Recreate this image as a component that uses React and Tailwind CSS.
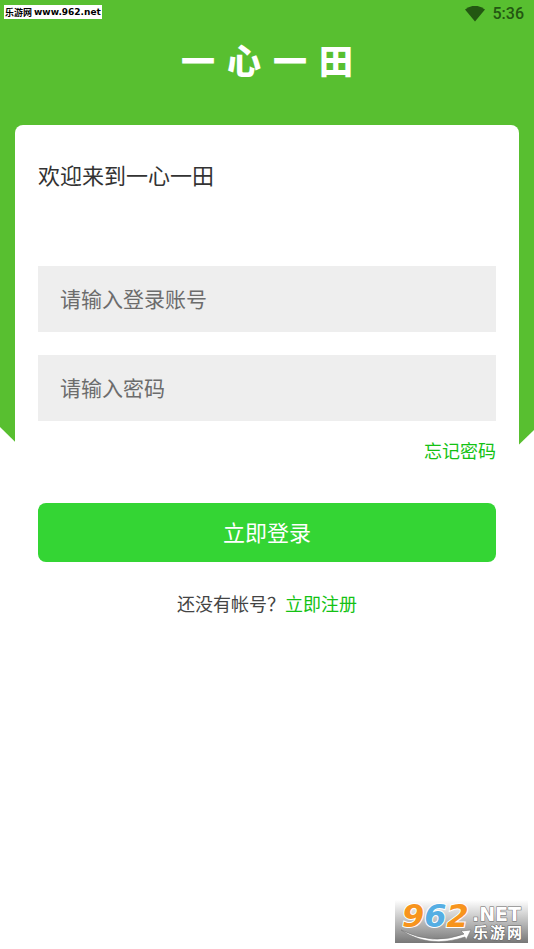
const TITLE = ["一", "心", "一", "田"];

function StatusBar() {
  return (
    <header className="flex h-7 items-center justify-between pr-[10px]">
      <p className="ml-1 mt-[-4px] flex h-[14px] items-center gap-[2px] bg-white px-px text-[9px] font-bold leading-none text-black">
        <span>乐游网</span>
        <span className="font-['DejaVu_Sans','Noto_Sans_CJK_SC',sans-serif]">www.962.net</span>
      </p>
      <div className="flex items-center gap-2 text-[#235712]">
        <svg width="20" height="16" viewBox="0 0 20 16" fill="currentColor" aria-hidden="true">
          <path d="M0 3.5 Q10 -4 20 3.5 L10 15.5 Z" />
        </svg>
        <time className="font-[Roboto,sans-serif] text-base font-medium">5:36</time>
      </div>
    </header>
  );
}

function SiteLogo() {
  return (
    <svg className="h-[43px] w-[133px]" viewBox="0 0 133 43" role="img" aria-label="962.NET 乐游网">
      <defs>
        <linearGradient id="plate" x1="0" y1="0" x2="0" y2="1">
          <stop offset="0" stopColor="#ffffff" />
          <stop offset="0.5" stopColor="#bdbdbd" />
          <stop offset="1" stopColor="#777777" />
        </linearGradient>
      </defs>
      <rect width="133" height="43" fill="url(#plate)" />
      <path d="M6 30 Q38 46 69 34 L66 31 L76 30 L71 40 L70 37 Q34 49 6 30 Z" fill="#ffffff" stroke="#777777" strokeWidth="0.6" />
      <g fontFamily="DejaVu Sans, sans-serif" fontWeight="700" fontStyle="italic" fontSize="32" stroke="#ffffff" strokeWidth="2" paintOrder="stroke">
        <text x="7" y="27">
          <tspan fill="#f7941d">9</tspan>
          <tspan fill="#55aee3">6</tspan>
          <tspan fill="#f7941d">2</tspan>
        </text>
      </g>
      <g fill="#ffffff" stroke="#666666" strokeWidth="1" paintOrder="stroke" fontWeight="700">
        <text x="77" y="21" fontSize="19" fontFamily="DejaVu Sans, sans-serif">.NET</text>
        <text x="78 95 112" y="38" fontSize="15" fontFamily="Noto Sans CJK SC, sans-serif">乐游网</text>
      </g>
    </svg>
  );
}

export default function App() {
  return (
    <div className="relative isolate flex min-h-screen flex-col bg-white font-['Noto_Sans_CJK_SC',sans-serif]">
      <div
        aria-hidden="true"
        className="absolute inset-x-0 top-0 -z-10 h-[690px] bg-[#58bf30] [clip-path:polygon(0_0,100%_0,100%_430px,50%_100%,0_427px)]"
      />
      <StatusBar />
      <h1 className="flex h-[97px] justify-center gap-3 pt-[14px] text-[34px] font-black leading-9 text-white">
        {TITLE.map((character, index) => (
          <span key={index}>{character}</span>
        ))}
      </h1>
      <main className="mx-[15px] flex-1 rounded-lg bg-white px-[23px] pt-[33px]">
        <h2 className="text-[22px] leading-8 text-[#333]">欢迎来到一心一田</h2>
        <form className="mt-[76px]" onSubmit={(event) => event.preventDefault()}>
          <input
            type="text"
            aria-label="登录账号"
            placeholder="请输入登录账号"
            className="block h-[66px] w-full bg-[#eee] px-[22px] pb-[2px] text-[21px] outline-none placeholder:text-[#6c6c6c]"
          />
          <input
            type="password"
            aria-label="密码"
            placeholder="请输入密码"
            className="mt-[23px] block h-[66px] w-full bg-[#eee] px-[22px] pb-[2px] text-[21px] outline-none placeholder:text-[#6c6c6c]"
          />
          <div className="mt-[15px] flex justify-end">
            <a href="#forgot" className="text-lg text-[#14c214]">忘记密码</a>
          </div>
          <button type="submit" className="mt-[39px] h-[59px] w-full rounded-lg bg-[#34d534] pb-[2px] text-[22px] text-white">
            立即登录
          </button>
        </form>
        <p className="mt-[27px] text-center text-lg text-[#444]">
          还没有帐号？<a href="#register" className="text-[#14c214]">立即注册</a>
        </p>
      </main>
      <footer className="flex justify-end pb-[6px] pr-[6px]">
        <SiteLogo />
      </footer>
    </div>
  );
}
